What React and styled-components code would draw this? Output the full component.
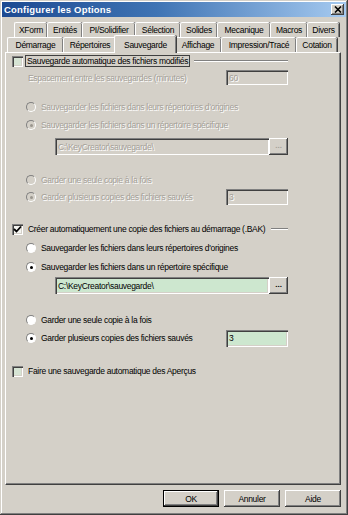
import React from "react";
import styled, { createGlobalStyle } from "styled-components";

const Global = createGlobalStyle`
  html, body { margin: 0; padding: 0; background: #d4d0c8; }
  body { font-family: "Liberation Sans", Arial, sans-serif; }
  * { box-sizing: border-box; }
`;

const FONT = `"Liberation Sans", Arial, sans-serif`;

const Window = styled.div`
  width: 348px;
  height: 515px;
  background: #d4d0c8;
  padding: 2px;
  box-shadow: inset -1px -1px #404040, inset 1px 1px #d4d0c8,
    inset -2px -2px #808080, inset 2px 2px #ffffff;
  display: flex;
  flex-direction: column;
  font-family: ${FONT};
  font-size: 8.5px;
  letter-spacing: -0.3px;
  color: #000;
`;

const TitleBar = styled.div`
  height: 15px;
  background: linear-gradient(to right, #1c4a92, #3f74b4 45%, #a6caf0);
  display: flex;
  align-items: center;
  justify-content: space-between;
  padding: 0 2px 0 2px;
`;

const Title = styled.span`
  color: #fff;
  font-weight: bold;
  font-size: 9.5px;
  letter-spacing: 0.2px;
`;

const CloseBtn = styled.div`
  width: 13px;
  height: 11px;
  background: #d4d0c8;
  box-shadow: inset -1px -1px #404040, inset 1px 1px #fff, inset -2px -2px #808080;
  display: flex;
  align-items: center;
  justify-content: center;
`;

const Body = styled.div`
  flex: 1;
  display: flex;
  flex-direction: column;
  padding: 5px 5px 0 3px;
`;

const TabRow = styled.div`
  display: flex;
  height: 15px;
  padding-left: ${(p) => p.$indent}px;
  position: relative;
  z-index: ${(p) => (p.$front ? 2 : 1)};
`;

const Tab = styled.div`
  width: ${(p) => p.$w}px;
  height: ${(p) => (p.$active ? 18 : 15)}px;
  margin: ${(p) => (p.$active ? "-2px -2px -1px -2px" : "0")};
  padding: 0 ${(p) => (p.$active ? 2 : 0)}px;
  background: #d4d0c8;
  border-top: 1px solid #fff;
  border-left: 1px solid #fff;
  border-radius: 2px 2px 0 0;
  box-shadow: inset -1px 0 #808080, 1px 0 #404040;
  display: flex;
  align-items: center;
  justify-content: center;
  white-space: nowrap;
  position: relative;
  z-index: ${(p) => (p.$active ? 3 : 1)};
`;

const Panel = styled.div`
  height: 433px;
  border-top: 1px solid #fff;
  border-left: 1px solid #fff;
  border-right: 1px solid #404040;
  border-bottom: 1px solid #404040;
  box-shadow: inset -1px -1px #808080;
  display: flex;
  flex-direction: column;
  padding-left: 6px;
  position: relative;
  z-index: 1;
`;

const Content = styled.div`
  width: 276px;
  display: flex;
  flex-direction: column;
`;

const Row = styled.div`
  display: flex;
  align-items: center;
  height: ${(p) => p.$h || 16}px;
  margin-top: ${(p) => p.$mt || 0}px;
  padding-left: ${(p) => p.$indent || 0}px;
  white-space: nowrap;
`;

const Label = styled.span`
  color: ${(p) => (p.$disabled ? "#a4a098" : "#000")};
  text-shadow: ${(p) => (p.$disabled ? "1px 1px #fff" : "none")};
  margin-left: ${(p) => p.$ml ?? 4}px;
  padding: 0 1px;
  border: 1px ${(p) => (p.$focus ? "solid #404040" : "solid transparent")};
  line-height: 10px;
`;

const GroupLine = styled.div`
  flex: 1;
  height: 2px;
  margin-left: 4px;
  border-top: 1px solid #808080;
  border-bottom: 1px solid #fff;
`;

const CheckBox = styled.div`
  width: 11px;
  height: 11px;
  flex: none;
  background: ${(p) => (p.$checked ? "#f4f4f0" : "#d6e4d4")};
  box-shadow: inset 1px 1px #808080, inset 2px 2px #404040, inset -1px -1px #fff,
    inset -2px -2px #d4d0c8;
  display: flex;
  align-items: center;
  justify-content: center;
`;

const Radio = styled.div`
  width: 10px;
  height: 10px;
  flex: none;
  border-radius: 50%;
  background: ${(p) => (p.$disabled ? "#d4d0c8" : "#fff")};
  border: 1px solid;
  border-color: #808080 #fff #fff #808080;
  display: flex;
  align-items: center;
  justify-content: center;
  &::after {
    content: "";
    width: 3px;
    height: 3px;
    border-radius: 50%;
    background: ${(p) => (p.$disabled ? "#9a968e" : "#000")};
    display: ${(p) => (p.$checked ? "block" : "none")};
  }
`;

const Field = styled.div`
  width: ${(p) => p.$w}px;
  height: ${(p) => p.$h || 16}px;
  margin-left: ${(p) => (p.$auto ? "auto" : "0")};
  background: ${(p) => (p.$disabled ? "#d4d0c8" : "#cde7cf")};
  color: ${(p) => (p.$disabled ? "#a4a098" : "#000")};
  text-shadow: ${(p) => (p.$disabled ? "1px 1px #fff" : "none")};
  box-shadow: inset 1px 1px #808080, inset 2px 2px #404040, inset -1px -1px #fff,
    inset -2px -2px #d4d0c8;
  display: flex;
  align-items: center;
  padding-left: 3px;
  font-size: 8.5px;
`;

const SmallBtn = styled.div`
  width: 19px;
  height: 17px;
  background: #d4d0c8;
  box-shadow: inset -1px -1px #404040, inset 1px 1px #fff, inset -2px -2px #808080;
  display: flex;
  align-items: center;
  justify-content: center;
  color: ${(p) => (p.$disabled ? "#a4a098" : "#000")};
  font-weight: bold;
  font-size: 8px;
  letter-spacing: 0;
  padding-bottom: 3px;
`;

const Footer = styled.div`
  display: flex;
  justify-content: flex-end;
  gap: 5px;
  margin-top: 5px;
`;

const Button = styled.div`
  width: 56px;
  height: 17px;
  background: #d4d0c8;
  display: flex;
  align-items: center;
  justify-content: center;
  box-shadow: ${(p) =>
    p.$default
      ? "inset 0 0 0 1px #000, inset -2px -2px #404040, inset 2px 2px #fff, inset -3px -3px #808080"
      : "inset -1px -1px #404040, inset 1px 1px #fff, inset -2px -2px #808080"};
`;

const CheckMark = () => (
  <svg width="9" height="9" viewBox="0 0 9 9">
    <path d="M1 4 L3.5 6.5 L8 1.5" stroke="#000" strokeWidth="1.8" fill="none" />
  </svg>
);

const tabs1 = [
  ["XForm", 33],
  ["Entités", 35],
  ["PI/Solidifier", 53],
  ["Sélection", 45],
  ["Solides", 37],
  ["Mecanique", 53],
  ["Macros", 37],
  ["Divers", 32],
];
const tabs2 = [
  ["Démarrage", 56],
  ["Répertoires", 53],
  ["Sauvegarde", 62, true],
  ["Affichage", 47],
  ["Impression/Tracé", 75],
  ["Cotation", 41],
];

function RadioRow({ mt, checked, disabled, children, right }) {
  return (
    <Row $mt={mt} $indent={14} $h={16}>
      <Radio $checked={checked} $disabled={disabled} />
      <Label $disabled={disabled} $ml={3}>
        {children}
      </Label>
      {right}
    </Row>
  );
}

export default function App() {
  return (
    <>
      <Global />
      <Window>
        <TitleBar>
          <Title>Configurer les Options</Title>
          <CloseBtn>
            <svg width="8" height="7" viewBox="0 0 8 7">
              <path d="M1 0.5 L7 6.5 M7 0.5 L1 6.5" stroke="#000" strokeWidth="1.6" />
            </svg>
          </CloseBtn>
        </TitleBar>
        <Body>
          <TabRow $indent={9}>
            {tabs1.map(([t, w]) => (
              <Tab key={t} $w={w}>
                {t}
              </Tab>
            ))}
          </TabRow>
          <TabRow $indent={2} $front>
            {tabs2.map(([t, w, a]) => (
              <Tab key={t} $w={w} $active={a}>
                {t}
              </Tab>
            ))}
          </TabRow>
          <Panel>
            <Content>
              <Row $h={16}>
                <CheckBox />
                <Label $focus $ml={2}>
                  Sauvegarde automatique des fichiers modifiés
                </Label>
                <GroupLine />
              </Row>
              <Row $mt={1} $h={15} $indent={14}>
                <Label $disabled $ml={0}>
                  Espacement entre les sauvegardes (minutes)
                </Label>
                <Field $w={62} $h={15} $auto $disabled>
                  60
                </Field>
              </Row>
              <RadioRow mt={14} disabled>
                Sauvegarder les fichiers dans leurs répertoires d'origines
              </RadioRow>
              <RadioRow mt={2} disabled checked>
                Sauvegarder les fichiers dans un répertoire spécifique
              </RadioRow>
              <Row $mt={5} $h={17} $indent={43}>
                <Field $w={215} $h={17} $disabled>
                  C:\KeyCreator\sauvegarde\
                </Field>
                <SmallBtn $disabled>...</SmallBtn>
              </Row>
              <RadioRow mt={17} disabled>
                Garder une seule copie à la fois
              </RadioRow>
              <RadioRow
                mt={1}
                disabled
                checked
                right={
                  <Field $w={62} $h={16} $auto $disabled>
                    3
                  </Field>
                }
              >
                Garder plusieurs copies des fichiers sauvés
              </RadioRow>
              <Row $mt={16} $h={16}>
                <CheckBox $checked>
                  <CheckMark />
                </CheckBox>
                <Label $ml={3}>
                  Créer automatiquement une copie des fichiers au démarrage (.BAK)
                </Label>
                <GroupLine />
              </Row>
              <RadioRow mt={3}>Sauvegarder les fichiers dans leurs répertoires d'origines</RadioRow>
              <RadioRow mt={3} checked>
                Sauvegarder les fichiers dans un répertoire spécifique
              </RadioRow>
              <Row $mt={2} $h={17} $indent={43}>
                <Field $w={215} $h={17}>
                  C:\KeyCreator\sauvegarde\
                </Field>
                <SmallBtn>...</SmallBtn>
              </Row>
              <RadioRow mt={18}>Garder une seule copie à la fois</RadioRow>
              <RadioRow
                mt={2}
                checked
                right={
                  <Field $w={62} $h={17} $auto>
                    3
                  </Field>
                }
              >
                Garder plusieurs copies des fichiers sauvés
              </RadioRow>
              <Row $mt={17} $h={16}>
                <CheckBox />
                <Label $ml={3}>Faire une sauvegarde automatique des Aperçus</Label>
              </Row>
            </Content>
          </Panel>
          <Footer>
            <Button $default>OK</Button>
            <Button>Annuler</Button>
            <Button>Aide</Button>
          </Footer>
        </Body>
      </Window>
    </>
  );
}
